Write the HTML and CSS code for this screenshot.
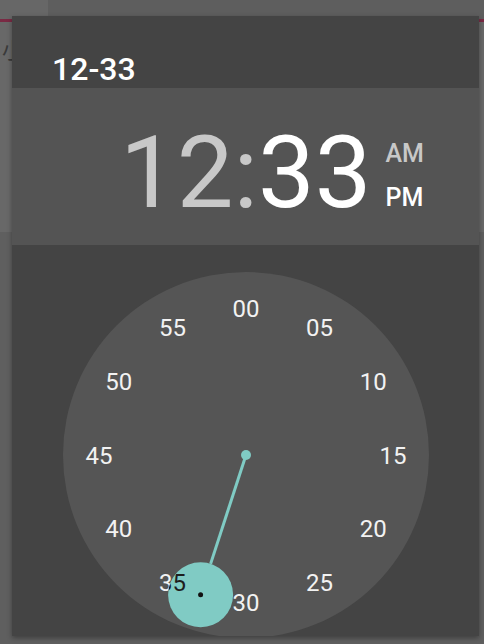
FILE: index.html
```html
<!DOCTYPE html>
<html>
<head>
<meta charset="utf-8">
<link rel="stylesheet" href="styles.css">
</head>
<body>
<div class="page">
  <div class="page-top"><div class="page-tab"></div></div>
  <div class="page-accent"></div>
  <div class="page-text">小</div>
</div>
<div class="dialog">
  <div class="header">12-33</div>
  <div class="time">
    <div class="big"><span class="dim">12:</span><span class="on">33</span></div>
    <div class="ampm"><span class="dim">AM</span><span class="on">PM</span></div>
  </div>
  <div class="clock">
    <svg class="face" width="467" height="391" viewBox="0 0 467 391">
      <defs>
        <clipPath id="sel"><circle cx="188.6" cy="349.8" r="32.5"/></clipPath>
      </defs>
      <circle cx="234" cy="210" r="183" fill="#555555"/>
      <g class="nums" fill="#f2f2f2">
        <text x="234" y="71.5">00</text>
        <text x="307.5" y="91.2">05</text>
        <text x="361.3" y="145">10</text>
        <text x="381" y="218.5">15</text>
        <text x="361.3" y="292">20</text>
        <text x="307.5" y="345.8">25</text>
        <text x="234" y="365.5">30</text>
        <text x="160.5" y="345.8">35</text>
        <text x="106.7" y="292">40</text>
        <text x="87" y="218.5">45</text>
        <text x="106.7" y="145">50</text>
        <text x="160.5" y="91.2">55</text>
      </g>
      <line x1="234" y1="210" x2="198.6" y2="318.9" stroke="#80cbc4" stroke-width="3"/>
      <circle cx="234" cy="210" r="5" fill="#80cbc4"/>
      <circle cx="188.6" cy="349.8" r="32.5" fill="#80cbc4"/>
      <g class="nums" fill="#1e1e1e" clip-path="url(#sel)">
        <text x="234" y="365.5">30</text>
        <text x="160.5" y="345.8">35</text>
      </g>
      <circle cx="188.6" cy="349.8" r="2.5" fill="#111111"/>
    </svg>
  </div>
</div>
</body>
</html>
```

FILE: styles.css
```css
html, body {
  margin: 0;
  padding: 0;
}
body {
  width: 484px;
  height: 644px;
  background: #5f5f5f;
  position: relative;
  overflow: hidden;
  font-family: Roboto, "Noto Sans CJK SC", sans-serif;
}
.page {
  width: 484px;
}
.page-top {
  height: 19px;
  background: #5e5e5e;
}
.page-tab {
  width: 48px;
  height: 19px;
  background: #676767;
}
.page-accent {
  height: 3px;
  background: #7a2a44;
}
.page-text {
  background: #686868;
  height: 200px;
  padding-top: 10px;
  padding-left: 2px;
  font-size: 22px;
  color: #3a3a3a;
}
.dialog {
  position: absolute;
  left: 12px;
  top: 16px;
  width: 467px;
  height: 620px;
  overflow: hidden;
  background: #444444;
  box-shadow: 0 2px 5px rgba(0, 0, 0, 0.35);
  display: flex;
  flex-direction: column;
}
.header {
  height: 72px;
  box-sizing: border-box;
  padding: 34px 0 0 40px;
  background: #444444;
  color: #ffffff;
  font-size: 32px;
  font-weight: 500;
  line-height: 38px;
}
.time {
  height: 157px;
  box-sizing: border-box;
  background: #545454;
  display: flex;
  align-items: flex-start;
  padding: 35px 0 0 108px;
}
.big {
  font-size: 101px;
  font-weight: 400;
  line-height: 100px;
  letter-spacing: 0;
}
.dim {
  color: #c8c8c8;
}
.on {
  color: #ffffff;
}
.ampm {
  display: flex;
  flex-direction: column;
  margin-left: 14px;
  margin-top: 9px;
  font-size: 25px;
  font-weight: 500;
  line-height: 44px;
}
.clock {
  flex: 1;
  background: #444444;
}
.face {
  display: block;
}
.nums text {
  font-family: Roboto, sans-serif;
  font-size: 24px;
  text-anchor: middle;
}
```
